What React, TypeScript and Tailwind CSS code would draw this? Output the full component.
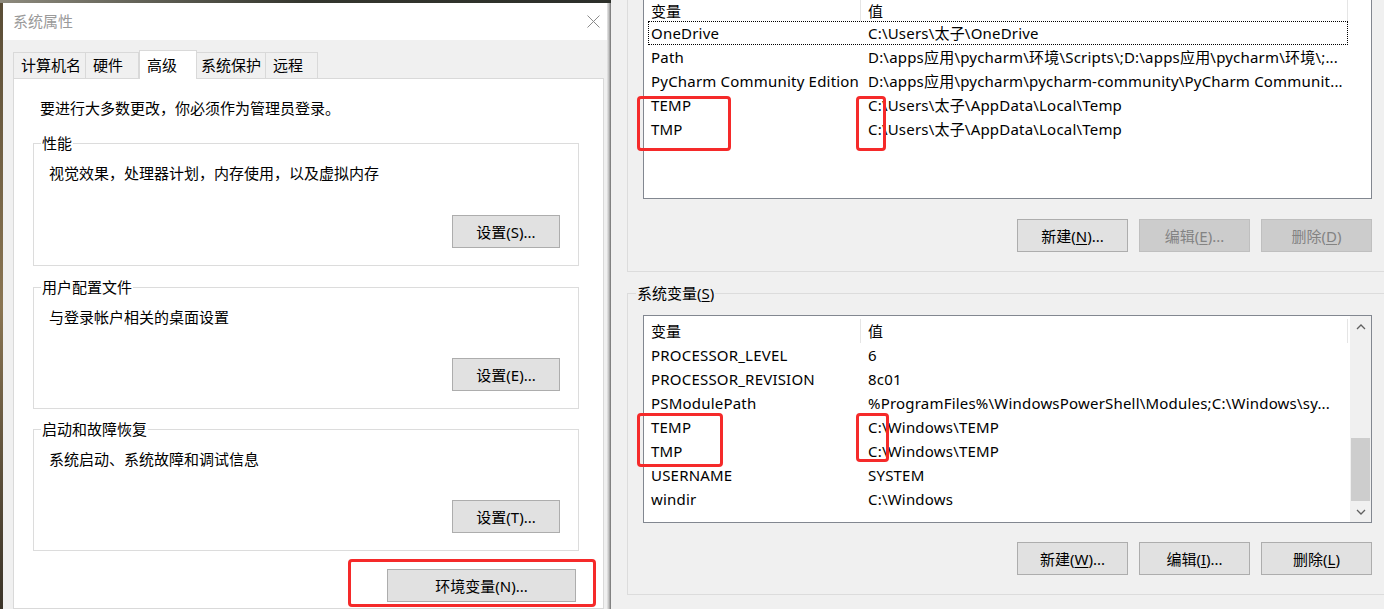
import type { ReactNode } from 'react';

const font = "font-['Noto_Sans','Noto_Sans_CJK_SC',sans-serif]";

function Btn({ children, className = '', disabled = false }: { children: ReactNode; className?: string; disabled?: boolean }) {
    return (
        <button
            type="button"
            className={`flex h-[33px] items-center justify-center border text-[15px] leading-[20px] ${disabled ? 'border-[#bfbfbf] bg-[#cccccc] text-[#838383]' : 'border-[#adadad] bg-[#e1e1e1] text-black'} ${className}`}
        >
            {children}
        </button>
    );
}

function Key({ children }: { children: ReactNode }) {
    return <span className="underline underline-offset-2">{children}</span>;
}

function Group({ title, text, button, className = '' }: { title: string; text: string; button: string; className?: string }) {
    return (
        <div className={`flex h-[122px] flex-col border border-[#dcdcdc] ${className}`}>
            <div className="-mt-[11px] ml-[7px] w-fit bg-white px-px leading-[20px]">{title}</div>
            <div className="ml-[15px] mt-[10px] leading-[20px]">{text}</div>
            <Btn className="mb-[17px] mr-[18px] mt-auto w-[108px] self-end">{button}</Btn>
        </div>
    );
}

const userVars: [string, string][] = [
    ['OneDrive', 'C:\\Users\\太子\\OneDrive'],
    ['Path', 'D:\\apps应用\\pycharm\\环境\\Scripts\\;D:\\apps应用\\pycharm\\环境\\;...'],
    ['PyCharm Community Edition', 'D:\\apps应用\\pycharm\\pycharm-community\\PyCharm Communit...'],
    ['TEMP', 'C:\\Users\\太子\\AppData\\Local\\Temp'],
    ['TMP', 'C:\\Users\\太子\\AppData\\Local\\Temp'],
];

const sysVars: [string, string][] = [
    ['PROCESSOR_LEVEL', '6'],
    ['PROCESSOR_REVISION', '8c01'],
    ['PSModulePath', '%ProgramFiles%\\WindowsPowerShell\\Modules;C:\\Windows\\sy...'],
    ['TEMP', 'C:\\Windows\\TEMP'],
    ['TMP', 'C:\\Windows\\TEMP'],
    ['USERNAME', 'SYSTEM'],
    ['windir', 'C:\\Windows'],
];

function Rows({ rows, focusFirst = false }: { rows: [string, string][]; focusFirst?: boolean }) {
    return (
        <div className="flex flex-col tracking-[0.2px]">
            {rows.map(([name, value], i) => (
                <div
                    key={name + i}
                    className={`ml-[4px] flex h-[24px] w-[700px] items-center border leading-[20px] ${focusFirst && i === 0 ? 'border-dotted border-black' : 'border-transparent'}`}
                >
                    <div className="w-[212px] shrink-0 overflow-hidden whitespace-nowrap pl-[2px]">{name}</div>
                    <div className="min-w-0 flex-1 overflow-hidden whitespace-nowrap pl-[7px]">{value}</div>
                </div>
            ))}
        </div>
    );
}

function Header({ className = '' }: { className?: string }) {
    return (
        <div className={`flex bg-white ${className}`}>
            <div className="flex w-[217px] shrink-0 items-center border-r border-[#e5e5e5] pl-[7px]">变量</div>
            <div className="flex w-[487px] shrink-0 items-center border-r border-[#e5e5e5] pl-[7px]">值</div>
        </div>
    );
}

function Chevron({ up }: { up: boolean }) {
    return (
        <svg width="10" height="6" viewBox="0 0 10 6">
            <polyline
                points={up ? '1,5 5,1 9,5' : '1,1 5,5 9,1'}
                fill="none"
                stroke="#606060"
                strokeWidth="1.3"
            />
        </svg>
    );
}

function Mark({ className }: { className: string }) {
    return <div className={`pointer-events-none absolute rounded-[4px] border-[3px] border-[#f52a2a] ${className}`} />;
}

export default function App() {
    return (
        <div className={`relative flex h-[609px] w-[1384px] overflow-hidden bg-[#f0f0f0] text-[15px] text-black ${font}`}>
            {/* system properties dialog */}
            <div className="flex w-[611px] shrink-0 flex-col">
                <div className="h-[3px] bg-gradient-to-r from-[#8d8a7d] via-[#34362e] to-[#2c2f2a]" />
                <div className="flex flex-1">
                    <div className="w-[3px] bg-gradient-to-b from-[#5a4d36] via-[#8a7552] to-[#3a3328]" />
                    <div className="flex w-[604px] flex-col bg-[#f0f0f0]">
                        <div className="flex h-[37px] items-center justify-between bg-white pl-[10px] pr-[7px]">
                            <span className="-mt-px leading-[20px] text-[#9a9a9a]">系统属性</span>
                            <svg width="13" height="13" viewBox="0 0 13 13">
                                <path d="M0.5 0.5 L12.5 12.5 M12.5 0.5 L0.5 12.5" stroke="#8a8a8a" strokeWidth="1" />
                            </svg>
                        </div>
                        <div className="flex flex-1 flex-col pl-[10px] pr-[3px] pt-[10px]">
                            <div className="flex h-[28px] items-end">
                                <div className="flex h-[26px] w-[73px] items-center border border-b-0 border-[#d9d9d9] pl-[7px]">计算机名</div>
                                <div className="flex h-[26px] w-[53px] items-center border-r border-t border-[#d9d9d9] pl-[7px]">硬件</div>
                                <div className="relative z-10 -mb-px flex h-[29px] w-[58px] items-center border border-b-0 border-[#d9d9d9] bg-white pl-[7px]">高级</div>
                                <div className="flex h-[26px] w-[69px] items-center border-r border-t border-[#d9d9d9] pl-[4px]">系统保护</div>
                                <div className="flex h-[26px] w-[52px] items-center border-r border-t border-[#d9d9d9] pl-[7px]">远程</div>
                            </div>
                            <div className="flex flex-1 flex-col border border-[#d9d9d9] bg-white pl-[19px] pr-[24px]">
                                <div className="ml-[7px] mt-[19px] leading-[20px]">要进行大多数更改，你必须作为管理员登录。</div>
                                <Group
                                    className="mt-[25px] h-[123px]"
                                    title="性能"
                                    text="视觉效果，处理器计划，内存使用，以及虚拟内存"
                                    button="设置(S)..."
                                />
                                <Group className="mt-[21px]" title="用户配置文件" text="与登录帐户相关的桌面设置" button="设置(E)..." />
                                <Group className="mt-[20px]" title="启动和故障恢复" text="系统启动、系统故障和调试信息" button="设置(T)..." />
                                <Btn className="mr-[3px] mt-[18px] w-[189px] self-end">环境变量(N)...</Btn>
                            </div>
                        </div>
                    </div>
                    <div className="w-[4px] bg-gradient-to-r from-[#e8e8e8] via-[#bdbdbd] to-[#6f6f6f]" />
                </div>
            </div>

            {/* environment variables dialog */}
            <div className="flex min-w-0 flex-1 flex-col bg-[#f0f0f0] pl-[16px]">
                <div className="flex flex-col border-b border-l border-[#dcdcdc] pl-[15px]">
                    <div className="flex h-[199px] w-[729px] flex-col border-x border-b border-[#828790] bg-white">
                        <Header className="h-[21px] leading-[18px]" />
                        <Rows rows={userVars} focusFirst />
                    </div>
                    <div className="mb-[19px] mt-[20px] flex w-[729px] justify-end gap-[11px]">
                        <Btn className="w-[111px]">新建(<Key>N</Key>)...</Btn>
                        <Btn className="w-[111px]" disabled>编辑(<Key>E</Key>)...</Btn>
                        <Btn className="w-[111px]" disabled>删除(<Key>D</Key>)</Btn>
                    </div>
                </div>

                <div className="mt-[21px] flex flex-col border-b border-l border-t border-[#dcdcdc] pl-[15px]">
                    <div className="-mt-[11px] ml-[-7px] w-fit bg-[#f0f0f0] px-px leading-[20px]">
                        系统变量(<Key>S</Key>)
                    </div>
                    <div className="mt-[12px] flex h-[208px] w-[729px] border border-[#828790] bg-white">
                        <div className="flex min-w-0 flex-1 flex-col">
                            <Header className="h-[27px] pt-[3px] leading-[20px]" />
                            <Rows rows={sysVars} />
                        </div>
                        <div className="flex w-[21px] shrink-0 flex-col bg-[#f0f0f0]">
                            <div className="flex h-[21px] items-center justify-center">
                                <Chevron up />
                            </div>
                            <div className="flex flex-1 flex-col justify-end">
                                <div className="mx-px h-[63px] bg-[#cdcdcd]" />
                            </div>
                            <div className="flex h-[21px] items-center justify-center">
                                <Chevron up={false} />
                            </div>
                        </div>
                    </div>
                    <div className="mb-[19px] mt-[19px] flex w-[729px] justify-end gap-[11px]">
                        <Btn className="w-[111px]">新建(<Key>W</Key>)...</Btn>
                        <Btn className="w-[111px]">编辑(<Key>I</Key>)...</Btn>
                        <Btn className="w-[111px]">删除(<Key>L</Key>)</Btn>
                    </div>
                </div>
            </div>

            {/* red annotation boxes */}
            <Mark className="left-[348px] top-[559px] h-[48px] w-[248px]" />
            <Mark className="left-[637px] top-[96px] h-[55px] w-[94px]" />
            <Mark className="left-[856px] top-[96px] h-[55px] w-[30px]" />
            <Mark className="left-[637px] top-[413px] h-[54px] w-[86px]" />
            <Mark className="left-[856px] top-[413px] h-[49px] w-[33px]" />
        </div>
    );
}
